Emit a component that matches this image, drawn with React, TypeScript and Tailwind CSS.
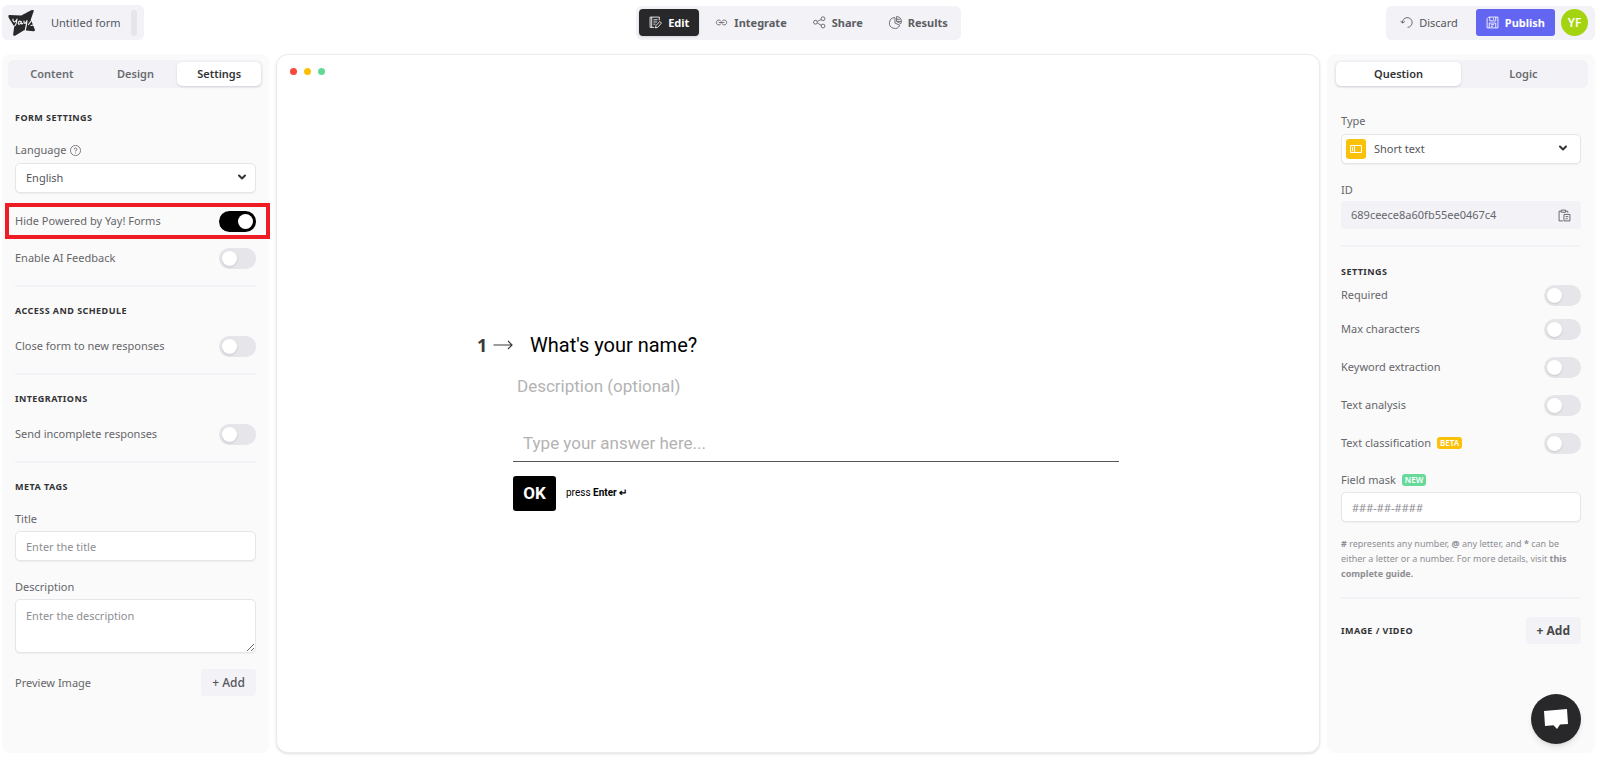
import React, { useState } from "react";
import { ChevronDown } from "lucide-react";

interface ToggleRowProps {
  id: string;
  label: string;
  defaultOn?: boolean;
  badge?: string;
}

function ToggleRow({ id, label, defaultOn = false, badge }: ToggleRowProps) {
  const [on, setOn] = useState(defaultOn);

  return (
    <div className="flex h-[22px] items-center justify-between">
      <label htmlFor={id} className="flex items-center gap-1.5 text-[#66666b]">
        {label}
        {badge && <Badge className="bg-[#fbc108]">{badge}</Badge>}
      </label>
      <input
        id={id}
        type="checkbox"
        checked={on}
        onChange={(e) => setOn(e.target.checked)}
        className="h-[21px] w-[37px] shrink-0 cursor-pointer appearance-none rounded-full bg-[#e5e5ea] p-[3px] before:block before:size-[15px] before:rounded-full before:bg-white before:shadow-sm checked:bg-black checked:before:ml-4"
      />
    </div>
  );
}

function Badge({ className, children }: { className: string; children: React.ReactNode }) {
  return (
    <span className={`flex h-3 items-center rounded-[3px] px-[3px] text-[8px] leading-3 font-semibold text-white ${className}`}>
      {children}
    </span>
  );
}

function SectionTitle({ children }: { children: React.ReactNode }) {
  return <h2 className="text-[9px] leading-4 font-bold tracking-wider text-[#333336] uppercase">{children}</h2>;
}

function Divider() {
  return <hr className="border-t-2 border-[#f2f2f7]" />;
}

interface TabsProps {
  tabs: string[];
  initial: string;
}

function PanelTabs({ tabs, initial }: TabsProps) {
  const [active, setActive] = useState(initial);

  return (
    <div className="flex h-7 rounded-md bg-[#f2f2f7] p-0.5" role="tablist">
      {tabs.map((tab) => (
        <button
          key={tab}
          role="tab"
          aria-selected={tab === active}
          onClick={() => setActive(tab)}
          className={`flex-1 rounded-[5px] font-semibold ${
            tab === active ? "bg-white text-[#333336] shadow-sm" : "text-[#6b6b70]"
          }`}
        >
          {tab}
        </button>
      ))}
    </div>
  );
}

function Logo() {
  return (
    <svg viewBox="0 0 28 28" className="size-7" aria-label="Yay! Forms">
      <path d="M1 6 L13 6.5 C15 6 21 2 24 1 C25.5 0.6 26 1.3 25.6 2.6 L22.8 10.5 L26.8 20.5 C27.2 21.8 26.6 22.4 25.4 22.2 L16 21.2 L7.5 26.4 C6 27.2 5 26.6 5.2 25 L6.2 17.5 L0.9 9 C0.2 7.6 0.2 6.4 1 6Z" fill="#28282a" />
      <g fill="none" stroke="#f2f2f7" strokeWidth="1.2" strokeLinecap="round" strokeLinejoin="round">
        <path d="M5 10 C4.5 13 6.5 14 8.5 11 M9 10 C8.5 14 7.5 17 6.3 17" />
        <path d="M13 12.5 C11 11.5 9.6 13.5 10.5 15 C11.5 16 13 14 13.3 12.5 C13 14.5 13.5 15.5 14.8 14.5" />
        <path d="M16 12 C15.8 15 17.5 15 18.8 12 M19 11.5 C18.6 16 17.5 20 16.5 25" />
        <path d="M26.5 7.5 L20.5 15.5 M23 16.5 L27 15.5" />
      </g>
    </svg>
  );
}

function EditIcon() {
  return (
    <svg viewBox="0 0 24 24" className="size-[13px]" fill="none" stroke="currentColor" strokeWidth="1.6" strokeLinejoin="round">
      <path d="M19 8 V2 H2 V21 H10 M5 2 V21 M8 7 H16 M8 11 H15 M8 15 H12" />
      <path d="M12 22 L13 17.5 L20 10 L23 13 L16 21 Z" />
    </svg>
  );
}

function LinkIcon() {
  return (
    <svg viewBox="0 0 24 24" className="size-[13px]" fill="none" stroke="currentColor" strokeWidth="1.6">
      <path d="M11 10 A4.5 4.5 0 1 0 11 14 M7 12 H17 M13 10 A4.5 4.5 0 1 1 13 14" />
    </svg>
  );
}

function ShareIcon() {
  return (
    <svg viewBox="0 0 24 24" className="size-[13px]" fill="none" stroke="currentColor" strokeWidth="1.6">
      <circle cx="4.5" cy="11.5" r="3.5" />
      <circle cx="18.5" cy="5" r="3.5" />
      <circle cx="18.5" cy="18.5" r="3.5" />
      <path d="M8 10 L15.2 6.5 M8 13 L15.2 17" />
    </svg>
  );
}

function ResultsIcon() {
  return (
    <svg viewBox="0 0 24 24" className="size-[13px]" fill="none" stroke="currentColor" strokeWidth="1.6" strokeLinejoin="round">
      <path d="M11 3 A10 10 0 1 0 20 17 L11 13 Z" />
      <path d="M14 1 A9 9 0 0 1 22 14 L14 10 Z M14 6 H20 M14 10 H23" />
    </svg>
  );
}

function UndoIcon() {
  return (
    <svg viewBox="0 0 24 24" className="size-[13px]" fill="none" stroke="currentColor" strokeWidth="1.6">
      <path d="M1 9 L4.5 13 L9 10 M4.5 13 A9 9 0 1 1 14 21" />
    </svg>
  );
}

function SaveIcon() {
  return (
    <svg viewBox="0 0 24 24" className="size-[13px]" fill="none" stroke="currentColor" strokeWidth="1.6" strokeLinejoin="round">
      <path d="M2 5 L5 2 H22 V22 H2 Z M7 2 V9 H18 V2 M14 4 V7 M6 22 V13 H18 V22 M9 16 H15 M9 19 H13" />
    </svg>
  );
}

function ClipboardIcon() {
  return (
    <svg viewBox="0 0 24 24" className="size-[13px]" fill="none" stroke="currentColor" strokeWidth="1.8" strokeLinejoin="round">
      <path d="M9 22 H2 V4 H6 M14 4 H18 V7 M6 2 H14 V6 H6 Z" />
      <path d="M11 10 H22 V22 H11 Z M14 14 H19 M14 18 H18" />
    </svg>
  );
}

const fieldClass = "rounded-[5px] border border-[#e5e5ea] bg-white shadow-[0_1px_1px_rgba(0,0,0,0.05)] outline-none placeholder:text-[#8e8e93]";

const navItems = [
  { name: "Edit", icon: <EditIcon /> },
  { name: "Integrate", icon: <LinkIcon /> },
  { name: "Share", icon: <ShareIcon /> },
  { name: "Results", icon: <ResultsIcon /> },
];

function Header() {
  const [page, setPage] = useState("Edit");

  return (
    <header className="grid grid-cols-[1fr_auto_1fr] items-center pt-[5px]">
      <div className="flex h-[35px] items-center justify-self-start rounded-md bg-[#f2f2f7] pr-[7px] pl-1.5">
        <Logo />
        <span className="ml-[15px] text-[#55555a]">Untitled form</span>
        <span className="ml-2.5 h-[26px] w-1.5 rounded-full bg-[#e5e5ea]" />
      </div>

      <nav className="flex h-[34px] items-center rounded-md bg-[#f2f2f7] pl-[3px] font-bold">
        {navItems.map(({ name, icon }) => (
          <button
            key={name}
            onClick={() => setPage(name)}
            className={`flex h-[27px] items-center gap-1.5 rounded ${
              page === name ? "mr-[3px] bg-[#28282a] px-2.5 text-white shadow-sm" : "px-[13px] text-[#5d5d62]"
            }`}
          >
            {icon}
            {name}
          </button>
        ))}
      </nav>

      <div className="flex h-[34px] items-center justify-self-end rounded-md bg-[#f2f2f7] pr-[7px] pl-3.5">
        <button className="flex items-center gap-1.5 text-[#55555a]">
          <UndoIcon />
          Discard
        </button>
        <button className="ml-[18px] flex h-[27px] items-center gap-1.5 rounded-[3px] bg-[#6366f1] px-2.5 font-bold text-white">
          <SaveIcon />
          Publish
        </button>
        <button className="ml-1.5 size-[27px] rounded-full bg-[#a4d410] text-xs font-semibold text-white">YF</button>
      </div>
    </header>
  );
}

function FormPanel() {
  return (
    <aside className="w-[267px] shrink-0 rounded-lg bg-[#fafafa] px-1.5 pt-1.5">
      <PanelTabs tabs={["Content", "Design", "Settings"]} initial="Settings" />

      <div className="flex flex-col px-[7px] pt-[22px] text-[#66666b]">
        <SectionTitle>Form settings</SectionTitle>
        <label htmlFor="language" className="mt-4 flex h-4 items-center gap-1">
          Language
          <svg viewBox="0 0 24 24" className="size-[11px]" fill="none" stroke="currentColor" strokeWidth="1.8">
            <circle cx="12" cy="12" r="11" />
            <path d="M9 9.5 A3 3 0 1 1 12 12.5 V14 M12 16.5 V18.5" />
          </svg>
        </label>
        <div className="relative mt-[5px]">
          <select id="language" className={`h-[30px] w-full appearance-none px-2.5 text-[#55555a] ${fieldClass}`}>
            <option>English</option>
          </select>
          <ChevronDown className="pointer-events-none absolute top-2 right-2 size-3 text-[#333336]" strokeWidth={4} />
        </div>

        <div className="-mr-3.5 -ml-2.5 mt-2.5 border-4 border-[#ee1c25] py-[3px] pr-2.5 pl-1.5">
          <ToggleRow id="hide-branding" label="Hide Powered by Yay! Forms" defaultOn />
        </div>
        <div className="mt-2 mb-4">
          <ToggleRow id="ai-feedback" label="Enable AI Feedback" />
        </div>
        <Divider />

        <div className="my-4 space-y-4">
          <SectionTitle>Access and schedule</SectionTitle>
          <ToggleRow id="close-form" label="Close form to new responses" />
        </div>
        <Divider />

        <div className="my-4 space-y-4">
          <SectionTitle>Integrations</SectionTitle>
          <ToggleRow id="incomplete" label="Send incomplete responses" />
        </div>
        <Divider />

        <div className="mt-4">
          <SectionTitle>Meta tags</SectionTitle>
        </div>
        <label htmlFor="meta-title" className="mt-4">Title</label>
        <input id="meta-title" placeholder="Enter the title" className={`mt-1 h-[30px] px-2.5 ${fieldClass}`} />
        <label htmlFor="meta-description" className="mt-[18px]">Description</label>
        <textarea id="meta-description" placeholder="Enter the description" className={`mt-1 h-[54px] px-2.5 py-2 ${fieldClass}`} />

        <div className="mt-4 flex items-center justify-between">
          <span>Preview Image</span>
          <button className="h-[27px] rounded bg-[#f2f2f7] px-[11px] text-xs font-medium text-[#55555a]">+ Add</button>
        </div>
      </div>
    </aside>
  );
}

function FormPreview() {
  return (
    <main className="flex min-w-0 flex-1 flex-col rounded-xl border border-[#ececf0] bg-white font-['Roboto',sans-serif] shadow">
      <div className="flex gap-[7px] px-[13px] pt-[13px]">
        <span className="size-[7px] rounded-full bg-[#f8483c]" />
        <span className="size-[7px] rounded-full bg-[#fbc108]" />
        <span className="size-[7px] rounded-full bg-[#62d996]" />
      </div>

      <div className="flex flex-1 items-center justify-center pt-4">
        <div className="w-full max-w-[642px]">
          <div className="flex h-6 items-center">
            <span className="w-4 font-['Noto_Sans',sans-serif] text-lg font-bold text-[#3a3a3c]">1</span>
            <svg viewBox="0 0 20 10" className="mr-[17px] h-2.5 w-5" fill="none" stroke="#3a3a3c" strokeWidth="1.2">
              <path d="M0.5 5 H19 M15 1 L19 5 L15 9" />
            </svg>
            <h1 className="text-xl leading-6 text-black">What's your name?</h1>
          </div>

          <div className="ml-9">
            <p className="mt-[17px] ml-1 text-[17px] leading-6 text-[#b3b3b3]">Description (optional)</p>
            <input
              aria-label="Your answer"
              placeholder="Type your answer here..."
              className="mt-[22px] h-[42px] w-full border-b border-[#555] px-2.5 pt-1.5 text-[17px] outline-none placeholder:text-[#b3b3b3]"
            />
            <div className="mt-3.5 flex items-center gap-2.5">
              <button className="h-[35px] w-[43px] rounded-[3px] bg-black text-[17px] font-bold text-white">OK</button>
              <span className="text-[10px] text-black">
                press <b>Enter ↵</b>
              </span>
            </div>
          </div>
        </div>
      </div>
    </main>
  );
}

function QuestionPanel() {
  return (
    <aside className="w-[268px] shrink-0 rounded-lg bg-[#fafafa] px-[7px] pt-1.5">
      <PanelTabs tabs={["Question", "Logic"]} initial="Question" />

      <div className="flex flex-col px-[7px] pt-[25px] text-[#66666b]">
        <label htmlFor="question-type">Type</label>
        <div className="relative mt-[5px]">
          <select id="question-type" className={`h-[30px] w-full appearance-none pl-8 text-[#55555a] ${fieldClass}`}>
            <option>Short text</option>
          </select>
          <span className="pointer-events-none absolute top-[5px] left-[5px] flex size-5 items-center justify-center rounded-[3px] bg-[#fbc108] text-white">
            <svg viewBox="0 0 24 16" className="h-2 w-3" fill="none" stroke="currentColor" strokeWidth="2">
              <path d="M1 1 H23 V15 H1 Z M5 4 V12 M9 1 V15" />
            </svg>
          </span>
          <ChevronDown className="pointer-events-none absolute top-2 right-3 size-3 text-[#333336]" strokeWidth={4} />
        </div>

        <span className="mt-[18px]">ID</span>
        <div className="mt-[3px] mb-4 flex h-7 items-center justify-between rounded-[3px] bg-[#f2f2f7] px-2.5">
          <span>689ceece8a60fb55ee0467c4</span>
          <button aria-label="Copy ID">
            <ClipboardIcon />
          </button>
        </div>
        <Divider />

        <div className="mt-[17px]">
          <SectionTitle>Settings</SectionTitle>
        </div>
        <div className="mt-1 mb-3">
          <ToggleRow id="required" label="Required" />
        </div>
        <div className="space-y-4">
          <ToggleRow id="max-characters" label="Max characters" />
          <ToggleRow id="keyword-extraction" label="Keyword extraction" />
          <ToggleRow id="text-analysis" label="Text analysis" />
          <ToggleRow id="text-classification" label="Text classification" badge="BETA" />
        </div>

        <label htmlFor="field-mask" className="mt-4 flex h-5 items-center gap-1.5">
          Field mask
          <Badge className="bg-[#66d99b]">NEW</Badge>
        </label>
        <input id="field-mask" placeholder="###-##-####" className={`mt-0.5 h-[30px] px-2.5 ${fieldClass}`} />
        <p className="mt-3.5 mb-4 text-[9px] leading-[15px] text-[#8e8e93]">
          <b>#</b> represents any number, <b>@</b> any letter, and <b>*</b> can be either a letter or a number. For more details, visit{" "}
          <a href="#guide" className="font-bold">this complete guide.</a>
        </p>
        <Divider />

        <div className="mt-[18px] flex items-center justify-between">
          <SectionTitle>Image / Video</SectionTitle>
          <button className="h-[27px] rounded bg-[#f2f2f7] px-[11px] text-xs font-bold text-[#48484a]">+ Add</button>
        </div>
      </div>
    </aside>
  );
}

export default function App() {
  return (
    <div className="flex min-h-screen flex-col bg-white pr-[5px] pb-[7px] pl-0.5 font-['Noto_Sans',sans-serif] text-[11px] leading-4">
      <Header />
      <div className="mt-3.5 flex flex-1 gap-[7px]">
        <FormPanel />
        <FormPreview />
        <QuestionPanel />
      </div>

      <button
        aria-label="Open chat"
        className="fixed right-[19px] bottom-4 flex size-[50px] items-center justify-center rounded-full bg-[#28282a] shadow-md"
      >
        <svg viewBox="0 0 24 20" className="h-5 w-6" fill="#fff">
          <path d="M0 2 L23 0 L24 15 L16 15.6 L13 20 L9.5 16.2 L1 17 Z" />
        </svg>
      </button>
    </div>
  );
}
